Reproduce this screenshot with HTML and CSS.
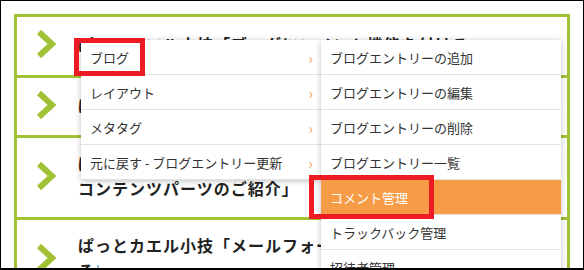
FILE: index.html
```html
<!DOCTYPE html>
<html>
    <head>
        <title>ブログ メニュー</title>
        <meta charset="UTF-8">
        <meta name="viewport" content="width=device-width, initial-scale=1.0">
        <link rel="stylesheet" href="styles.css">
    </head>
    <body>
        <div class="shot">
            <ul class="posts">
                <li class="post">
                    <svg class="chev" viewBox="0 0 20 28"><polyline points="2,2 15,14 2,26"/></svg>
                    <p class="title">ぱっとカエル小技「ブログにコメント機能を付ける」</p>
                </li>
                <li class="post">
                    <svg class="chev" viewBox="0 0 20 28"><polyline points="2,2 15,14 2,26"/></svg>
                    <p class="title">ぱっとカエル小技「ブログのレイアウト変更」</p>
                </li>
                <li class="post">
                    <svg class="chev" viewBox="0 0 20 28"><polyline points="2,2 15,14 2,26"/></svg>
                    <p class="title">ぱっとカエル小技「ブログで使える<br>コンテンツパーツのご紹介」</p>
                </li>
                <li class="post">
                    <svg class="chev" viewBox="0 0 20 28"><polyline points="2,2 15,14 2,26"/></svg>
                    <p class="title">ぱっとカエル小技「メールフォームを設置す<br>る<span class="caret"></span></p>
                </li>
            </ul>

            <div class="menu menu-main">
                <div class="item">ブログ<span class="arrow">›</span></div>
                <div class="item">レイアウト<span class="arrow">›</span></div>
                <div class="item">メタタグ<span class="arrow">›</span></div>
                <div class="item">元に戻す - ブログエントリー更新<span class="arrow">›</span></div>
            </div>

            <div class="menu menu-sub">
                <div class="item">ブログエントリーの追加</div>
                <div class="item">ブログエントリーの編集</div>
                <div class="item">ブログエントリーの削除</div>
                <div class="item">ブログエントリー一覧</div>
                <div class="item active">コメント管理</div>
                <div class="item">トラックバック管理</div>
                <div class="item">招待者管理</div>
            </div>

            <span class="mark mark-blog"></span>
            <span class="mark mark-comment"></span>
        </div>
    </body>
</html>
```

FILE: styles.css
```css
body {
    margin: 0;
    padding: 0;
    background-color: #fff;
    font-family: "Noto Sans CJK JP", "Noto Sans", sans-serif;
}
.shot {
    position: relative;
    box-sizing: border-box;
    width: 584px;
    height: 270px;
    border: 1px solid #000;
    border-bottom-width: 2px;
    overflow: hidden;
    background-color: #fff;
}
.posts {
    list-style: none;
    margin: 13px 13px 0;
    padding: 0;
    border: 3px solid #a2c236;
    border-bottom: none;
}
.post {
    display: flex;
    align-items: center;
    gap: 21px;
    padding: 13px 20px 16px;
    border-bottom: 3px solid #a2c236;
}
.post:first-child {
    padding-bottom: 17px;
}
.chev {
    flex: none;
    width: 20px;
    height: 28px;
    overflow: visible;
}
.chev polyline {
    fill: none;
    stroke: #a2c236;
    stroke-width: 6;
}
.title {
    margin: 0;
    font-size: 16px;
    line-height: 25px;
    font-weight: bold;
    letter-spacing: 1px;
    color: #222;
}
.caret {
    display: inline-block;
    width: 0;
    height: 14px;
    margin-left: 2px;
    border-left: 2px solid #8fb8e0;
    vertical-align: -2px;
}
.menu {
    position: absolute;
    top: 39px;
    width: 240px;
    background-color: #fff;
    box-shadow: 0 1px 6px rgba(0, 0, 0, 0.25);
}
.menu-main {
    left: 80px;
}
.menu-sub {
    left: 320px;
}
.item {
    display: flex;
    align-items: center;
    justify-content: space-between;
    height: 34px;
    padding: 0 8px 0 9px;
    border-bottom: 1px solid #e2e2e2;
    font-size: 13px;
    color: #333;
}
.item.active {
    background-color: #f69c46;
    color: #fff;
}
.arrow {
    color: #f5a25c;
    font-size: 15px;
}
.mark {
    position: absolute;
    box-sizing: border-box;
    border: 5px solid #ed1c24;
}
.mark-blog {
    left: 73px;
    top: 37px;
    width: 71px;
    height: 38px;
}
.mark-comment {
    left: 308px;
    top: 174px;
    width: 125px;
    height: 44px;
}
```
